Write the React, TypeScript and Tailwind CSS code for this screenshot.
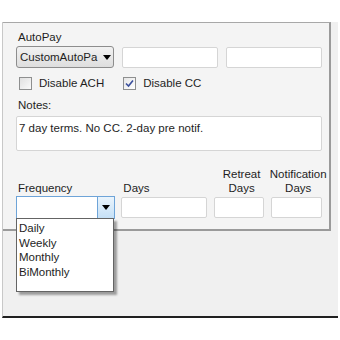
export default function App() {
  const font = { fontFamily: '"Liberation Sans", Arial, sans-serif' };
  const box = 'h-[21px] bg-white border border-[#d5d5d5] rounded-[2px]';

  return (
    <div className="w-[340px] h-[340px] bg-white pt-[22px] text-[11.5px] text-[#1e1e1e] leading-[14px]" style={font}>
      <div className="ml-[2px] w-[336px] h-[296px] bg-[#f0f0f0] border-l border-[#c8c8c8] border-b-2 border-b-[#202020] relative">
        {/* group panel */}
        <div className="w-[328px] h-[209px] bg-[#f4f4f4] border-t border-t-[#a8a8a8] border-r-2 border-r-[#9a9a9a] border-b-2 border-b-[#9a9a9a] pl-[13px] pt-[7px]">
          <div className="h-[15px] ml-[2px]">AutoPay</div>
          <div className="flex mt-[1px] h-[22px]">
            <div className="w-[98px] h-[22px] rounded-[3px] border border-[#8d8d8d] bg-gradient-to-b from-[#f2f2f2] to-[#dedede] flex items-center pl-[3px] overflow-hidden">
              <span className="w-[78px] whitespace-nowrap overflow-hidden">CustomAutoPa</span>
              <span className="ml-[5px] w-0 h-0 border-l-[4px] border-r-[4px] border-t-[5px] border-l-transparent border-r-transparent border-t-black" />
            </div>
            <div className={`${box} w-[96px] ml-[8px] mt-[1px]`} />
            <div className={`${box} w-[96px] ml-[8px] mt-[1px]`} />
          </div>
          <div className="flex items-center mt-[8px] h-[14px]">
            <div className="ml-[3px] w-[13px] h-[13px] border border-[#8e8f8f] bg-gradient-to-br from-[#e0e0e0] to-[#fafafa]" />
            <span className="ml-[7px]">Disable ACH</span>
            <div className="ml-[19px] w-[13px] h-[13px] border border-[#8e8f8f] bg-gradient-to-br from-[#e6e6e6] to-[#ffffff] flex items-center justify-center">
              <svg width="9" height="9" viewBox="0 0 9 9">
                <path d="M1 4.5 L3.5 7 L8 1.5" fill="none" stroke="#3a4f9c" strokeWidth="1.6" />
              </svg>
            </div>
            <span className="ml-[7px]">Disable CC</span>
          </div>
          <div className="mt-[8px] ml-[2px] h-[14px]">Notes:</div>
          <div className="mt-[4px] w-[306px] h-[35px] bg-white border border-[#d5d5d5] rounded-[2px] pl-[2px] pt-[4px]">
            7 day terms. No CC. 2-day pre notif.
          </div>
          <div className="flex mt-[16px] h-[28px] items-end">
            <div className="w-[105px] ml-[2px]">Frequency</div>
            <div className="w-[93px] ml-[1px]">Days</div>
            <div className="w-[52px] text-center leading-[14px]">
              Retreat
              <br />
              Days
            </div>
            <div className="w-[62px] text-center leading-[14px]">
              Notification
              <br />
              Days
            </div>
          </div>
          <div className="flex mt-[1px] h-[23px] relative">
            <div className="w-[99px] h-[23px] border border-[#6ea4d8] bg-white flex justify-end">
              <div className="w-[17px] h-full bg-gradient-to-b from-[#eaf4fc] to-[#c5e0f6] border-l border-[#6ea4d8] flex items-center justify-center">
                <span className="w-0 h-0 border-l-[4px] border-r-[4px] border-t-[5px] border-l-transparent border-r-transparent border-t-black" />
              </div>
            </div>
            <div className={`${box} w-[86px] ml-[6px] mt-[1px]`} />
            <div className={`${box} w-[50px] ml-[7px] mt-[1px]`} />
            <div className={`${box} w-[51px] ml-[7px] mt-[1px]`} />

            {/* open dropdown list */}
            <div className="absolute left-0 top-[22px] w-[98px] h-[74px] bg-white border border-[#646464] shadow-[3px_3px_2px_rgba(0,0,0,0.35)] pl-[2px] pt-[2px] z-10">
              <div className="h-[14.5px]">Daily</div>
              <div className="h-[14.5px]">Weekly</div>
              <div className="h-[14.5px]">Monthly</div>
              <div className="h-[14.5px]">BiMonthly</div>
            </div>
          </div>
        </div>
      </div>
    </div>
  );
}
